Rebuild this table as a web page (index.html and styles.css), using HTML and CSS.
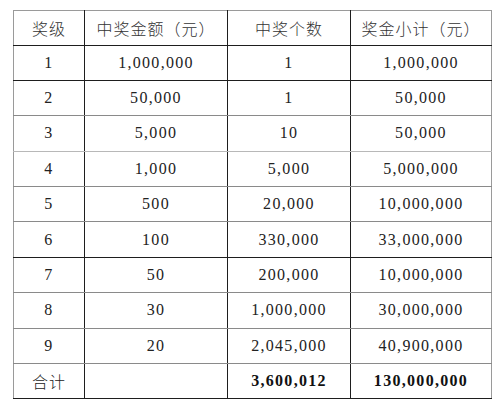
FILE: index.html
```html
<!DOCTYPE html>
<html lang="zh">
<head>
<meta charset="utf-8">
<link rel="stylesheet" href="styles.css">
</head>
<body>
<table class="prize">
  <colgroup>
    <col class="c1"><col class="c2"><col class="c3"><col class="c4">
  </colgroup>
  <tr class="head dark"><td>奖级</td><td>中奖金额（元）</td><td>中奖个数</td><td>奖金小计（元）</td></tr>
  <tr class="dark"><td class="n">1</td><td class="n">1,000,000</td><td class="n">1</td><td class="n">1,000,000</td></tr>
  <tr class="mid"><td class="n">2</td><td class="n">50,000</td><td class="n">1</td><td class="n">50,000</td></tr>
  <tr class="light"><td class="n">3</td><td class="n">5,000</td><td class="n">10</td><td class="n">50,000</td></tr>
  <tr class="mid"><td class="n">4</td><td class="n">1,000</td><td class="n">5,000</td><td class="n">5,000,000</td></tr>
  <tr class="mid"><td class="n">5</td><td class="n">500</td><td class="n">20,000</td><td class="n">10,000,000</td></tr>
  <tr class="dark"><td class="n">6</td><td class="n">100</td><td class="n">330,000</td><td class="n">33,000,000</td></tr>
  <tr class="mid"><td class="n">7</td><td class="n">50</td><td class="n">200,000</td><td class="n">10,000,000</td></tr>
  <tr class="mid"><td class="n">8</td><td class="n">30</td><td class="n">1,000,000</td><td class="n">30,000,000</td></tr>
  <tr class="mid"><td class="n">9</td><td class="n">20</td><td class="n">2,045,000</td><td class="n">40,900,000</td></tr>
  <tr class="total dark"><td>合计</td><td></td><td class="n b">3,600,012</td><td class="n b">130,000,000</td></tr>
</table>
</body>
</html>
```
FILE: styles.css
```css
html, body {
  margin: 0;
  padding: 0;
  background: #ffffff;
}
body {
  padding: 10px 0 0 13px;
  font-family: "Liberation Serif", "Noto Sans CJK SC", serif;
  font-size: 16px;
  color: #222;
}
.prize {
  border-collapse: collapse;
  width: 478px;
  table-layout: fixed;
  border-top: 1px solid #9a9a9a;
  border-left: 1px solid #9a9a9a;
  border-right: 1px solid #9a9a9a;
}
.c1 { width: 71px; }
.c2 { width: 143px; }
.c3 { width: 123px; }
.c4 { width: 141px; }
.prize td {
  height: 34.4px;
  padding: 0;
  text-align: center;
  vertical-align: middle;
  border-left: 1px solid #1e1e1e;
  line-height: 1;
}
.prize td:first-child {
  border-left: none;
}
.prize tr.head td {
  height: 33.5px;
  font-family: "Noto Sans CJK SC", sans-serif;
  font-weight: 300;
  letter-spacing: 1px;
  color: #333;
}
.prize tr.dark td { border-bottom: 1px solid #1e1e1e; }
.prize tr.mid td { border-bottom: 1px solid #8a8a8a; }
.prize tr.light td { border-bottom: 1px solid #b8b8b8; }
.prize tr.total td:first-child {
  font-family: "Noto Sans CJK SC", sans-serif;
  font-weight: 300;
  letter-spacing: 1px;
}
.n {
  letter-spacing: 1.3px;
  padding-left: 1px;
}
.b {
  font-weight: bold;
  color: #111;
}
```
